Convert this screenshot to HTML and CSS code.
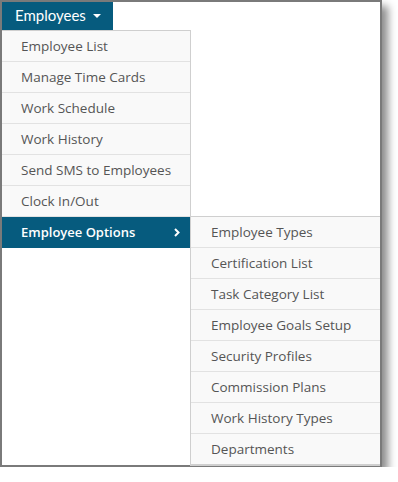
FILE: index.html
```html
<!DOCTYPE html>
<html lang="en">
<head>
  <meta charset="UTF-8">
  <title>Employees Menu</title>
  <link rel="stylesheet" href="styles.css">
</head>
<body>
  <div class="frame">
    <div class="menu-button">Employees <span class="caret"></span></div>
    <ul class="menu">
      <li>Employee List</li>
      <li>Manage Time Cards</li>
      <li>Work Schedule</li>
      <li>Work History</li>
      <li>Send SMS to Employees</li>
      <li>Clock In/Out</li>
      <li class="active has-sub">
        <span>Employee Options</span>
        <svg class="chevron" width="6" height="9" viewBox="0 0 6 9"><path d="M1 1l3.5 3.5L1 8" fill="none" stroke="#fff" stroke-width="2"/></svg>
        <ul class="submenu">
          <li>Employee Types</li>
          <li>Certification List</li>
          <li>Task Category List</li>
          <li>Employee Goals Setup</li>
          <li>Security Profiles</li>
          <li>Commission Plans</li>
          <li>Work History Types</li>
          <li>Departments</li>
        </ul>
      </li>
    </ul>
  </div>
</body>
</html>
```

FILE: styles.css
```css
body {
  margin: 0;
  background: #fff;
  font-family: 'Open Sans', 'Noto Sans', sans-serif;
}

.frame {
  width: 382px;
  height: 467px;
  box-sizing: border-box;
  border: 2px solid #7a7a7a;
  box-shadow: 6px 6px 8px rgba(0, 0, 0, 0.45);
  background: #fff;
}

.menu-button {
  width: 111px;
  height: 28px;
  box-sizing: border-box;
  padding-left: 13px;
  background: #065b7e;
  color: #fff;
  font-family: 'Lato', sans-serif;
  font-size: 15px;
  line-height: 27px;
}

.caret {
  display: inline-block;
  vertical-align: middle;
  margin-left: 3px;
  margin-top: -2px;
  border-left: 4px solid transparent;
  border-right: 4px solid transparent;
  border-top: 4px solid #fff;
}

.menu, .submenu {
  list-style: none;
  margin: 0;
  padding: 0;
}

.menu {
  width: 189px;
  border-top: 1px solid #cfcfcf;
  border-right: 1px solid #cfcfcf;
  box-sizing: border-box;
}

.menu li {
  height: 30px;
  line-height: 30px;
  padding-left: 19px;
  border-bottom: 1px solid #e2e2e2;
  background: #f9f9f9;
  color: #555;
  font-size: 13.5px;
}

.menu li.active {
  position: relative;
  background: #065b7e;
  color: #fff;
  font-size: 13px;
  font-weight: 600;
  border-bottom-color: #065b7e;
}

.chevron {
  position: absolute;
  right: 10px;
  top: 11px;
}

.submenu {
  position: absolute;
  left: 188px;
  top: -1px;
  width: 190px;
  box-sizing: border-box;
  border: 1px solid #cfcfcf;
  border-right: none;
}

.submenu li {
  padding-left: 20px;
  color: #555;
  font-size: 13.5px;
  font-weight: 400;
}

.submenu li:last-child {
  border-bottom: 1px solid #cfcfcf;
}
```
